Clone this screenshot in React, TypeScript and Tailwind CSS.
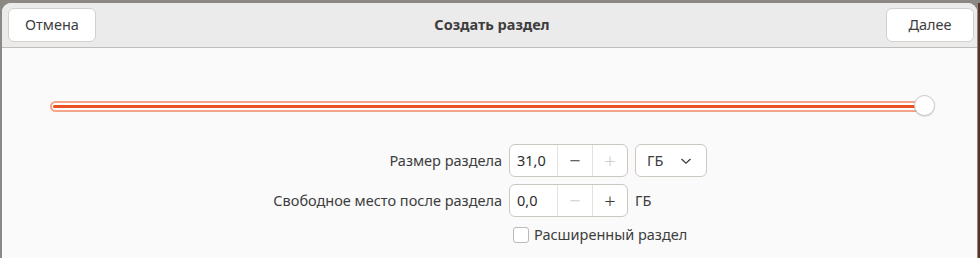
import React, { useState } from 'react';

const font = { fontFamily: '"Noto Sans", "Open Sans", sans-serif' };

const SpinBox = ({ value, minusDisabled, plusDisabled }: { value: string; minusDisabled?: boolean; plusDisabled?: boolean }) => (
  <div className="flex h-[33px] rounded-[6px] border border-[#cdc7c2] bg-white overflow-hidden">
    <div className="w-[47px] flex items-center pl-[7px] text-[14.5px] text-[#2e2e2e]">{value}</div>
    <div className={`w-[35px] flex items-center justify-center border-l border-[#e4e1de] text-[20px] font-light ${minusDisabled ? 'text-[#cfcfcf]' : 'text-[#3d3d3d]'}`}>−</div>
    <div className={`w-[35px] flex items-center justify-center border-l border-[#e4e1de] text-[20px] font-light ${plusDisabled ? 'text-[#cfcfcf]' : 'text-[#3d3d3d]'}`}>+</div>
  </div>
);

const App = () => {
  const [extended, setExtended] = useState(false);

  return (
    <div className="w-[980px] h-[258px] bg-[#5a3326] overflow-hidden flex flex-col" style={font}>
      <div className="h-[3px] bg-[#8c8884]"></div>
      <div className="flex-1 flex mr-[2px] bg-[#8c8884]">
        <div className="flex-1 flex flex-col rounded-t-[9px] ml-[2px] mr-[1px] bg-[#fafafa] overflow-hidden">
          {/* Header bar */}
          <div className="h-[45px] flex items-center justify-between pl-[6px] pr-[3px] bg-[#ebebeb] border-b border-[#c0bdbb]">
            <button className="w-[88px] h-[34px] rounded-[6px] border border-[#d3d0cd] bg-white text-[14.5px] text-[#3d3d3d]">
              Отмена
            </button>
            <div className="text-[14.5px] font-bold text-[#3d3d3d] ml-[2px]">Создать раздел</div>
            <button className="w-[88px] h-[34px] rounded-[6px] border border-[#d3d0cd] bg-white text-[14.5px] text-[#3d3d3d]">
              Далее
            </button>
          </div>

          {/* Slider */}
          <div className="relative mt-[47px] ml-[48px] mr-[52px] h-[22px] flex items-center">
            <div className="flex-1 h-[11px] rounded-full border-[2px] border-[#f5a68a] bg-white px-[1px] flex items-center">
              <div className="flex-1 h-[3px] rounded-full bg-[#e95420]"></div>
            </div>
            <div className="absolute right-[-10px] top-[0px] w-[21px] h-[21px] rounded-full bg-white border border-[#c9c6c3] shadow-[0_1px_1px_rgba(0,0,0,0.12)]"></div>
          </div>

          {/* Form */}
          <div className="mt-[27px] grid grid-cols-[500px_auto] gap-x-[7px] gap-y-[7px] text-[14.5px] text-[#3d3d3d]">
            <div className="flex items-center justify-end">Размер раздела</div>
            <div className="flex items-center gap-[7px]">
              <SpinBox value="31,0" plusDisabled />
              <div className="w-[72px] h-[33px] rounded-[6px] border border-[#cdc7c2] bg-white flex items-center justify-between pl-[11px] pr-[14px]">
                <span>ГБ</span>
                <svg width="12" height="8" viewBox="0 0 12 8" fill="none" stroke="#3d3d3d" strokeWidth="1.3">
                  <path d="M1.5 2l4.5 4.2 4.5-4.2" />
                </svg>
              </div>
            </div>

            <div className="flex items-center justify-end">Свободное место после раздела</div>
            <div className="flex items-center gap-[7px]">
              <SpinBox value="0,0" minusDisabled />
              <span>ГБ</span>
            </div>

            <div></div>
            <label className="flex items-center gap-[5px] pl-[4px]">
              <input
                type="checkbox"
                checked={extended}
                onChange={e => setExtended(e.target.checked)}
                className="appearance-none w-[16px] h-[16px] rounded-[3px] border border-[#bdb9b6] bg-white"
              />
              <span>Расширенный раздел</span>
            </label>
          </div>
        </div>
      </div>
    </div>
  );
};

export default App;
